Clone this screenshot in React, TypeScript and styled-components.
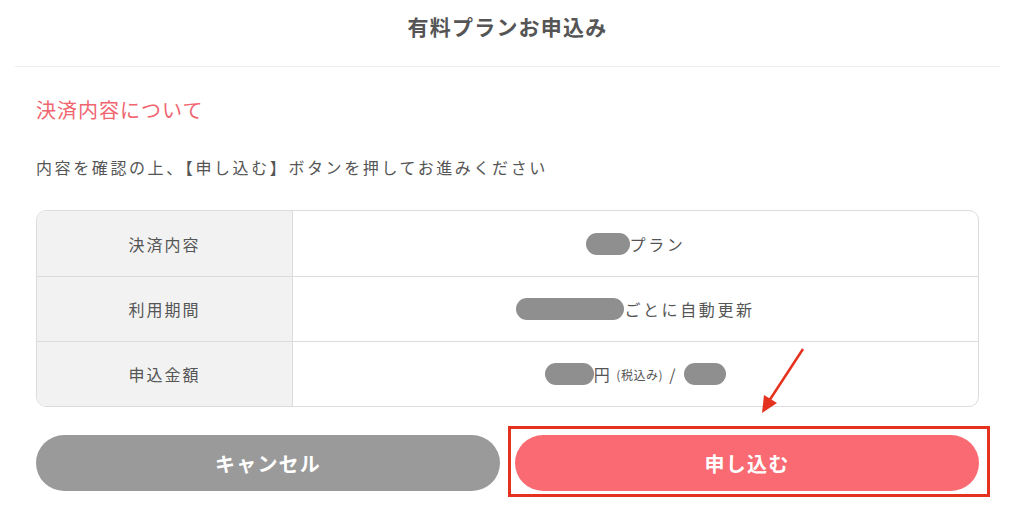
import styled, { createGlobalStyle } from "styled-components";

const GlobalStyle = createGlobalStyle`
  html, body {
    margin: 0;
    padding: 0;
    background: #fff;
  }
  body {
    font-family: "Noto Sans CJK JP", "Noto Sans", sans-serif;
    color: #555;
  }
`;

const Page = styled.div`
  width: 985px;
  margin-left: 15px;
  padding-bottom: 30px;
`;

const Header = styled.header`
  height: 66px;
  border-bottom: 1px solid #ececec;
  display: flex;
  justify-content: center;
  align-items: flex-start;
`;

const Title = styled.h1`
  margin: 11px 0 0;
  font-size: 21px;
  line-height: 30px;
  letter-spacing: 1.2px;
  font-weight: 700;
  color: #555;
`;

const Body = styled.div`
  padding: 0 21px;
`;

const SectionTitle = styled.h2`
  margin: 28px 0 0;
  font-size: 20px;
  line-height: 30px;
  letter-spacing: 1px;
  font-weight: 400;
  color: #f06670;
`;

const Lead = styled.p`
  margin: 30px 0 0;
  font-size: 16px;
  line-height: 24px;
  letter-spacing: 2.6px;
  color: #555;
`;

const Table = styled.div`
  margin-top: 31px;
  border: 1px solid #dcdcdc;
  border-radius: 10px;
  overflow: hidden;
`;

const Row = styled.div`
  display: grid;
  grid-template-columns: 256px 1fr;
  height: 65px;
  & + & {
    height: 64px;
    border-top: 1px solid #dcdcdc;
  }
`;

const Label = styled.div`
  background: #f2f2f2;
  border-right: 1px solid #dcdcdc;
  display: flex;
  align-items: center;
  justify-content: center;
  font-size: 16px;
  letter-spacing: 2px;
  color: #555;
`;

const Value = styled.div`
  display: flex;
  align-items: center;
  justify-content: center;
  font-size: 16px;
  letter-spacing: 2.6px;
  color: #555;
  white-space: pre;
`;

const Pill = styled.span<{ $w: number }>`
  display: inline-block;
  width: ${(p) => p.$w}px;
  height: 22px;
  border-radius: 11px;
  background: #8f8f8f;
`;

const Small = styled.span`
  font-size: 12px;
  letter-spacing: 0.5px;
  margin-left: 4px;
`;

const Actions = styled.div`
  margin-top: 28px;
  display: grid;
  grid-template-columns: 1fr 1fr;
  gap: 15px;
`;

const Button = styled.button<{ $primary?: boolean }>`
  display: block;
  height: 56px;
  border: none;
  border-radius: 28px;
  background: ${(p) => (p.$primary ? "#f96a72" : "#9a9a9a")};
  color: #fff;
  font-family: "Noto Sans CJK JP", sans-serif;
  font-size: 20px;
  letter-spacing: 1.2px;
  font-weight: 700;
  cursor: pointer;
  width: 100%;
`;

const Highlight = styled.div`
  position: relative;
`;

const Marker = styled.div`
  position: absolute;
  left: -7px;
  right: -11px;
  top: -9px;
  bottom: -6px;
  border: 3px solid #e5321f;
  pointer-events: none;
`;

const Arrow = styled.svg`
  position: absolute;
  left: 244px;
  top: -88px;
  overflow: visible;
`;

export default function App() {
  return (
    <>
      <GlobalStyle />
      <Page>
        <Header>
          <Title>有料プランお申込み</Title>
        </Header>
        <Body>
          <SectionTitle>決済内容について</SectionTitle>
          <Lead>内容を確認の上、【申し込む】ボタンを押してお進みください</Lead>
          <Table>
            <Row>
              <Label>決済内容</Label>
              <Value>
                <Pill $w={44} />
                プラン
              </Value>
            </Row>
            <Row>
              <Label>利用期間</Label>
              <Value>
                <Pill $w={108} />
                ごとに自動更新
              </Value>
            </Row>
            <Row>
              <Label>申込金額</Label>
              <Value>
                <Pill $w={49} />
                円<Small>(税込み)</Small> / <Pill $w={42} />
              </Value>
            </Row>
          </Table>
          <Actions>
            <Button>キャンセル</Button>
            <Highlight>
              <Button $primary>申し込む</Button>
              <Marker />
              <Arrow width="50" height="70" viewBox="0 0 50 70">
                <line x1="44" y1="2" x2="10" y2="54" stroke="#e5321f" strokeWidth="2.5" />
                <polygon points="3,66 5,48 18,56" fill="#e5321f" />
              </Arrow>
            </Highlight>
          </Actions>
        </Body>
      </Page>
    </>
  );
}
